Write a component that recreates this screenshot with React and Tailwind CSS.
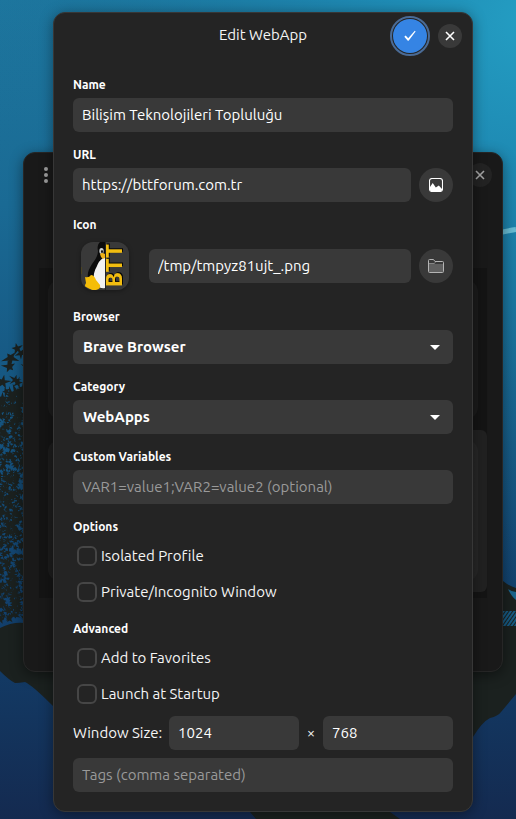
import React from "react";

function randomFrom(seed) {
  let s = seed;
  return () => {
    s = (s * 16807) % 2147483647;
    return s / 2147483647;
  };
}

function leafPath(x, y, r, turn, rand) {
  const points = [];
  for (let i = 0; i < 10; i++) {
    const angle = turn + (i * Math.PI) / 5;
    const length = i % 2 ? r * 0.32 : r * (0.55 + rand() * 0.6);
    points.push(`${(x + Math.cos(angle) * length).toFixed(1)} ${(y + Math.sin(angle) * length).toFixed(1)}`);
  }
  return `M${points.join("L")}Z`;
}

function buildLeaves() {
  const rand = randomFrom(4271);
  const leaves = [];
  for (let i = 0; i < 26; i++) {
    leaves.push(leafPath(rand() * 30 - 2, 348 + rand() * 66, 6 + rand() * 4, rand() * 6, rand));
  }
  for (let i = 0; i < 640; i++) {
    leaves.push(leafPath(rand() * 32 - 3, 398 + rand() * 222, 2 + rand() * 4, rand() * 6, rand));
  }
  return leaves.join("");
}

const LEAVES = buildLeaves();

function Wallpaper() {
  return (
    <svg
      className="absolute inset-0 h-full w-full"
      viewBox="0 0 516 819"
      preserveAspectRatio="xMidYMin slice"
      aria-hidden="true"
    >
      <defs>
        <linearGradient id="sky" x1="0" y1="0" x2="0" y2="1">
          <stop offset="0" stopColor="#1d769e" />
          <stop offset="0.25" stopColor="#1a6a94" />
          <stop offset="0.48" stopColor="#165681" />
          <stop offset="0.75" stopColor="#12406c" />
          <stop offset="1" stopColor="#142a50" />
        </linearGradient>
        <radialGradient id="glow" gradientUnits="userSpaceOnUse" cx="530" cy="20" r="560">
          <stop offset="0" stopColor="#249ec3" />
          <stop offset="0.25" stopColor="#1f8eb7" stopOpacity="0.9" />
          <stop offset="0.6" stopColor="#1c80a9" stopOpacity="0.5" />
          <stop offset="1" stopColor="#1a6a94" stopOpacity="0" />
        </radialGradient>
        <pattern id="hatch" width="3" height="3" patternUnits="userSpaceOnUse" patternTransform="rotate(35)">
          <rect width="2" height="3" fill="#175b85" />
        </pattern>
      </defs>
      <rect width="516" height="819" fill="url(#sky)" />
      <rect width="516" height="819" fill="url(#glow)" />
      <path d="M495 234Q506 231 516 229.500" fill="none" stroke="#68bcd3" strokeWidth="5" />
      <path d={LEAVES} fill="#1b211f" />
      <path
        d="M0 628Q12 622 24 623L80 600H440L503 581Q509 586 516 588V694L501 712Q498 716 490 718Q482 722 473 737L420 785L390 812L400 819H256L250 812L180 790L53 706Q32 685 25 682Q19 683 15 683Q9 680 0 671Z"
        fill="#1b211f"
      />
      <path d="M508 589Q512 592 516 592V600Q511 596 508 589Z" fill="#1a658e" />
      <rect x="503" y="611" width="13" height="15" fill="url(#hatch)" />
    </svg>
  );
}

function CrossIcon() {
  return (
    <svg viewBox="0 0 10 10" className="size-[10px]" fill="none" stroke="currentColor" strokeWidth="1.600" aria-hidden="true">
      <path d="M1 1L9 9M9 1L1 9" />
    </svg>
  );
}

function BackgroundWindow() {
  return (
    <section
      aria-label="WebApps"
      className="absolute inset-x-0 top-[140px] h-[520px] overflow-hidden rounded-xl border border-[#262626] bg-[#191919] shadow-[0_3px_14px_rgba(0,0,0,0.45)]"
    >
      <div className="flex h-[115px] items-start justify-between pt-[10px] pr-[10px] pl-5">
        <button type="button" aria-label="Menu" className="flex h-6 flex-col items-center justify-center gap-[2px]">
          <span className="size-1 rounded-full bg-[#9c9c9c]" />
          <span className="size-1 rounded-full bg-[#9c9c9c]" />
          <span className="size-1 rounded-full bg-[#9c9c9c]" />
        </button>
        <button
          type="button"
          aria-label="Close window"
          className="flex size-6 items-center justify-center rounded-full bg-[#232323] text-[#a5a5a5]"
        >
          <CrossIcon />
        </button>
      </div>
      <div className="mx-[15px] h-[330px] bg-[#141414] pt-3">
        <div className="mx-[9px] h-[139px] rounded-xl bg-[#1b1b1b]" />
        <div className="mt-[11px] ml-10 h-[162px] rounded-md bg-[#212121] pt-[10px] pr-[9px]">
          <div className="-ml-[31px] h-[141px] rounded-xl bg-linear-to-r from-[#1c1c1c] to-[#272727]" />
        </div>
      </div>
    </section>
  );
}

const FIELD =
  "h-[34px] w-full min-w-0 rounded-md bg-[#393939] px-[9px] pb-[2px] text-[15px] text-white outline-none placeholder:text-[#9a9a9a]";
const ROUND = "flex size-[34px] shrink-0 items-center justify-center rounded-full bg-[#393939] text-white";
const HEADING = "block text-xs leading-[18px] font-bold text-white";

function Group({ id, label, children }) {
  return (
    <div className="flex flex-col gap-1">
      <label htmlFor={id} className={HEADING}>
        {label}
      </label>
      {children}
    </div>
  );
}

function Dropdown({ id, value }) {
  return (
    <div className="relative">
      <select
        id={id}
        defaultValue={value}
        className="h-[34px] w-full appearance-none rounded-md bg-[#393939] px-[10px] text-[15px] font-bold text-white outline-none"
      >
        <option>{value}</option>
      </select>
      <svg
        viewBox="0 0 10 5"
        className="pointer-events-none absolute top-[15px] right-[13px] h-[5px] w-[10px]"
        fill="#fff"
        aria-hidden="true"
      >
        <path d="M0 0H10L5 5Z" />
      </svg>
    </div>
  );
}

function Check({ label }) {
  return (
    <label className="flex h-7 items-center gap-1 pl-1 text-[15px]">
      <input type="checkbox" className="size-5 shrink-0 appearance-none rounded-md border-2 border-[#464646] checked:bg-[#3584e4]" />
      {label}
    </label>
  );
}

function Logo() {
  return (
    <svg viewBox="0 0 48 48" className="size-12 rounded-xl shadow-[0_1px_4px_rgba(0,0,0,0.35)]" role="img" aria-label="BTT">
      <rect width="48" height="48" fill="#393939" />
      <path d="M0 25V32" stroke="#5e5010" />
      <path
        d="M24 0H19C17 2 16 5 17 9C17 13 15 17 11 22C8 27 6 31 7 36L13 46H24Z"
        fill="#0b0b0b"
      />
      <path d="M24 15C20 17 18 19 16 24C13 29 12 34 13 38C15 44 19 47 24 46Z" fill="#f2f2f2" />
      <ellipse cx="20.500" cy="9" rx="2.200" ry="3" fill="#cfd3d5" />
      <ellipse cx="21" cy="9.500" rx="1" ry="1.500" fill="#111" />
      <path d="M19 12Q21 10 24 12V16Q22 18 20 15Z" fill="#edb018" />
      <path d="M4 35Q8 36 10 33Q13 33 15 38L19 43Q20 47 15 48H11L5 45Q3 44 5 41Z" fill="#f5bd08" />
      <path d="M24.500 0V48" stroke="#222" />
      <text
        transform="rotate(-90)"
        x="-45"
        y="41"
        fontFamily="'Liberation Mono', monospace"
        fontWeight="700"
        fontSize="24"
        fill="#f2bd10"
        className="drop-shadow-[1px_1px_0_#080808]"
      >
        BTT
      </text>
    </svg>
  );
}

function EditDialog() {
  return (
    <form
      role="dialog"
      aria-labelledby="dialog-title"
      onSubmit={(event) => event.preventDefault()}
      className="relative mx-[30px] rounded-xl border border-[#373737] bg-[#242424] text-[#f5f5f5] shadow-[0_2px_14px_rgba(0,0,0,0.4)]"
    >
      <header className="grid h-[45px] grid-cols-[1fr_auto_1fr] items-center pr-[10px]">
        <h1 id="dialog-title" className="col-start-2 pl-[10px] text-[15px]">
          Edit WebApp
        </h1>
        <div className="flex items-center justify-end gap-[11px]">
          <button
            type="submit"
            aria-label="Save"
            className="flex size-[34px] items-center justify-center rounded-full bg-[#3584e4] text-white outline-2 outline-offset-1 outline-[#4a6b96]"
          >
            <svg viewBox="0 0 12 12" className="size-3" fill="currentColor" aria-hidden="true">
              <path d="M0.300 6.800L1.700 5.600L4.200 8.300L10.800 0.800L11.600 1.500L4.600 10.800H3.800Z" />
            </svg>
          </button>
          <button type="button" aria-label="Close" className="flex size-6 items-center justify-center rounded-full bg-[#393939] text-white">
            <CrossIcon />
          </button>
        </div>
      </header>

      <div className="flex flex-col gap-[14px] px-[19px] pt-[18px] pb-[19px]">
        <Group id="name" label="Name">
          <input id="name" defaultValue="Bilişim Teknolojileri Topluluğu" className={FIELD} />
        </Group>

        <Group id="url" label="URL">
          <div className="flex gap-2">
            <input id="url" defaultValue="https://bttforum.com.tr" className={FIELD} />
            <button type="button" aria-label="Fetch icon" className={ROUND}>
              <svg viewBox="0 0 14 14" className="size-[14px]" aria-hidden="true">
                <rect x="0.500" y="0.500" width="13" height="13" rx="2.500" fill="none" stroke="#fff" strokeWidth="1.100" />
                <path d="M1 10V9L3.700 5L6.800 9.500L9.800 7.500L13 11V12Q13 13 12 13H2Q1 13 1 12Z" fill="#fff" />
              </svg>
            </button>
          </div>
        </Group>

        <Group id="icon" label="Icon">
          <div className="flex h-14 items-center gap-2 pl-2">
            <div className="mr-3 shrink-0">
              <Logo />
            </div>
            <input id="icon" defaultValue="/tmp/tmpyz81ujt_.png" className={FIELD} />
            <button type="button" aria-label="Choose icon file" className={ROUND}>
              <svg viewBox="0 0 16 14" className="h-[14px] w-4" fill="none" stroke="#b4b4b4" aria-hidden="true">
                <path d="M1 5H15V13H1Z" fill="#606060" stroke="none" />
                <path d="M0.500 12.500V1.500Q0.500 0.500 1.500 0.500H5.500L7 2.500H14.500Q15.500 2.500 15.500 3.500V12.500Q15.500 13.500 14.500 13.500H1.500Q0.500 13.500 0.500 12.500Z" />
                <path d="M1 4.500H6L7.500 3.500" stroke="#858585" />
              </svg>
            </button>
          </div>
        </Group>

        <Group id="browser" label="Browser">
          <Dropdown id="browser" value="Brave Browser" />
        </Group>

        <Group id="category" label="Category">
          <Dropdown id="category" value="WebApps" />
        </Group>

        <Group id="variables" label="Custom Variables">
          <input id="variables" placeholder="VAR1=value1;VAR2=value2 (optional)" className={FIELD} />
        </Group>

        <fieldset>
          <legend className={HEADING}>Options</legend>
          <div className="flex flex-col gap-2 pt-[6px]">
            <Check label="Isolated Profile" />
            <Check label="Private/Incognito Window" />
          </div>
        </fieldset>

        <fieldset>
          <legend className={HEADING}>Advanced</legend>
          <div className="flex flex-col gap-2 pt-[6px]">
            <Check label="Add to Favorites" />
            <Check label="Launch at Startup" />
            <div className="flex items-center gap-2">
              <label htmlFor="width" className="w-[88px] shrink-0 text-[15px] whitespace-nowrap">
                Window Size:
              </label>
              <input id="width" defaultValue="1024" className={FIELD} />
              <span className="flex w-2 shrink-0 justify-center text-[15px]">×</span>
              <input aria-label="Window height" defaultValue="768" className={FIELD} />
            </div>
            <input aria-label="Tags" placeholder="Tags (comma separated)" className={FIELD} />
          </div>
        </fieldset>
      </div>
    </form>
  );
}

export default function App() {
  return (
    <main className="relative min-h-screen overflow-hidden bg-[#142a50] pt-3 pr-[13px] pb-[7px] pl-[23px] font-['Ubuntu','Noto_Sans',sans-serif] [font-variant-ligatures:none]">
      <Wallpaper />
      <div className="relative mx-auto max-w-[480px]">
        <BackgroundWindow />
        <EditDialog />
      </div>
    </main>
  );
}
